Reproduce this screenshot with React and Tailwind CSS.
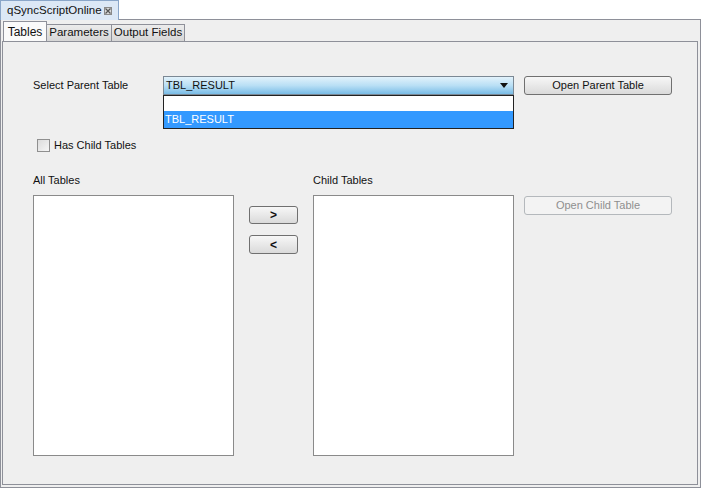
import React from "react";

function CloseGlyph() {
  return (
    <svg width="8" height="8" viewBox="0 0 8 8" className="block">
      <rect x="0.5" y="0.5" width="7" height="7" fill="#d8d8d8" stroke="#8a8a8a" />
      <path d="M1.5 1.5 L6.5 6.5 M6.5 1.5 L1.5 6.5" stroke="#555" strokeWidth="1.2" />
    </svg>
  );
}

function Btn({ children, disabled, className = "" }) {
  return (
    <div
      className={
        "flex items-center justify-center rounded-[3px] border text-[11px] " +
        (disabled
          ? "border-[#b4b8bc] bg-[#f3f3f3] text-[#8f8f8f] "
          : "border-[#707070] bg-gradient-to-b from-[#f7f7f7] to-[#dadada] text-[#111] ") +
        className
      }
    >
      {children}
    </div>
  );
}

export default function App() {
  return (
    <div
      className="w-[701px] h-[488px] bg-white text-[11px] text-[#111] overflow-hidden"
      style={{ fontFamily: '"Liberation Sans", Arial, sans-serif' }}
    >
      {/* editor tab */}
      <div className="flex h-[19px]">
        <div className="w-[119px] h-[20px] flex items-center pl-[6px] pr-[6px] justify-between bg-[#dce8f6] border border-b-0 border-[#8aa6c9]">
          <span className="text-[11.5px]">qSyncScriptOnline</span>
          <CloseGlyph />
        </div>
      </div>

      {/* outer frame */}
      <div className="h-[469px] border border-[#8e9099] bg-[#efefef] pl-[1px] pr-[2px] pb-[2px] flex flex-col">
        {/* inner tabs */}
        <div className="flex items-end h-[21px] pl-[1px] bg-[#efefef]">
          <div className="h-[20px] w-[44px] border border-b-0 border-[#8e9099] bg-[#fafafa] flex items-center justify-center text-[12px]">
            Tables
          </div>
          <div className="h-[17px] w-[65px] border border-b-0 border-l-0 border-[#8e9099] bg-gradient-to-b from-[#ececec] to-[#d6d6d6] flex items-center justify-center text-[11.5px]">
            Parameters
          </div>
          <div className="h-[17px] w-[73px] border border-b-0 border-l-0 border-[#8e9099] bg-gradient-to-b from-[#ececec] to-[#d6d6d6] flex items-center justify-center text-[11.5px]">
            Output Fields
          </div>
        </div>

        {/* inner panel */}
        <div className="flex-1 border border-[#8e9099] bg-[#efefef] relative">
          <div className="pl-[30px] pt-[34px]">
            {/* parent row */}
            <div className="flex items-center h-[19px]">
              <div className="w-[130px]">Select Parent Table</div>
              <div className="w-[351px] h-[19px] border border-[#7b8894] bg-gradient-to-b from-[#e2f2fb] via-[#b9dff5] to-[#79bce6] flex items-center justify-between pl-[2px] pr-[5px]">
                <span>TBL_RESULT</span>
                <svg width="8" height="5" viewBox="0 0 8 5">
                  <path d="M0 0 H8 L4 5 Z" fill="#111" />
                </svg>
              </div>
              <Btn className="ml-[10px] w-[148px] h-[19px]">Open Parent Table</Btn>
            </div>

            {/* has child */}
            <div className="flex items-center mt-[43px] ml-[4px] h-[14px]">
              <div className="w-[13px] h-[13px] border border-[#8f8f8f] bg-gradient-to-br from-[#dcdcdc] to-[#f6f6f6]" />
              <span className="ml-[4px]">Has Child Tables</span>
            </div>

            {/* labels */}
            <div className="flex mt-[20px] h-[14px]">
              <div className="w-[280px]">All Tables</div>
              <div>Child Tables</div>
            </div>

            {/* lists row */}
            <div className="flex mt-[9px]">
              <div className="w-[201px] h-[261px] border border-[#8a8a8a] bg-white" />
              <div className="w-[79px] flex flex-col items-center pt-[11px] gap-[11px]">
                <Btn className="w-[49px] h-[18px] font-bold text-[12px]">&gt;</Btn>
                <Btn className="w-[49px] h-[19px] font-bold text-[12px]">&lt;</Btn>
              </div>
              <div className="w-[201px] h-[261px] border border-[#8a8a8a] bg-white" />
              <Btn disabled className="ml-[10px] mt-[1px] w-[148px] h-[19px]">
                Open Child Table
              </Btn>
            </div>
          </div>

          {/* dropdown popup */}
          <div className="absolute left-[160px] top-[53px] w-[351px] h-[34px] border border-[#222] bg-white flex flex-col">
            <div className="h-[15px]" />
            <div className="h-[17px] bg-[#3399ff] text-white flex items-center pl-[1px]">TBL_RESULT</div>
          </div>
        </div>
      </div>
    </div>
  );
}
